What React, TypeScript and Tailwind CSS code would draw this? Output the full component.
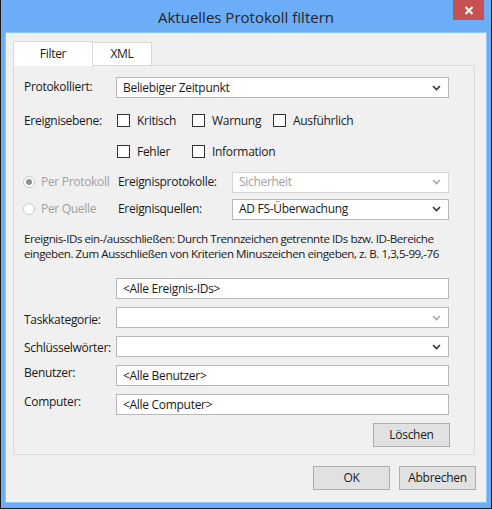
import React from "react";

const Chevron = ({ disabled }: { disabled?: boolean }) => (
  <svg width="9" height="6" viewBox="0 0 9 6" className="shrink-0">
    <path d="M1 1 L4.5 4.5 L8 1" fill="none" stroke={disabled ? "#a8a8a8" : "#333333"} strokeWidth="1.6" />
  </svg>
);

const Select = ({ value, disabled, className }: { value?: string; disabled?: boolean; className?: string }) => (
  <div
    className={`h-[21px] bg-white border flex items-center pl-[6px] pr-[7px] ${
      disabled ? "border-[#d6d6d6] text-[#a0a0a0]" : "border-[#b8b8b8] text-[#1a1a1a]"
    } ${className ?? ""}`}
  >
    <span className="flex-1 truncate">{value}</span>
    <Chevron disabled={disabled} />
  </div>
);

const Input = ({ value, className }: { value?: string; className?: string }) => (
  <div className={`h-[21px] bg-white border border-[#b8b8b8] flex items-center pl-[6px] text-[#1a1a1a] ${className ?? ""}`}>
    {value}
  </div>
);

const Check = ({ label, w }: { label: string; w?: string }) => (
  <div className={`flex items-center ${w ?? ""}`}>
    <div className="w-[13px] h-[13px] border border-[#333333] bg-white shrink-0" />
    <span className="ml-[7px] leading-[13px] whitespace-nowrap">{label}</span>
  </div>
);

const Radio = ({ label, checked }: { label: string; checked?: boolean }) => (
  <div className="flex items-center">
    <div className="w-[12px] h-[12px] rounded-full border border-[#c8c8c8] bg-white flex items-center justify-center shrink-0">
      {checked && <div className="w-[6px] h-[6px] rounded-full bg-[#8f8f8f]" />}
    </div>
    <span className="ml-[6px] text-[#a0a0a0] whitespace-nowrap">{label}</span>
  </div>
);

const Button = ({ label, className }: { label: string; className?: string }) => (
  <div
    className={`w-[77px] h-[24px] bg-[#e1e1e1] border border-[#adadad] flex items-center justify-center text-[#1a1a1a] shrink-0 ${className ?? ""}`}
  >
    {label}
  </div>
);

export default function App() {
  return (
    <div
      className="w-[492px] h-[509px] bg-[#6badf6] border-l border-r border-b border-[#1a1a1a] flex flex-col text-[12px] leading-[16px] tracking-[-0.3px] text-[#1a1a1a] overflow-hidden"
      style={{ fontFamily: "'Open Sans', 'Noto Sans', sans-serif" }}
    >
      {/* Title bar */}
      <div className="h-[32px] relative flex items-center justify-center shrink-0">
        <span className="text-[15px] tracking-normal text-[#262626] mt-[1px]">Aktuelles Protokoll filtern</span>
        <div className="absolute right-[7px] top-0 w-[31px] h-[20px] bg-[#c75050] flex items-center justify-center">
          <svg width="10" height="9" viewBox="0 0 10 9">
            <path d="M1.5 1 L8.5 8 M8.5 1 L1.5 8" stroke="white" strokeWidth="2" />
          </svg>
        </div>
      </div>

      {/* Client */}
      <div className="h-[471px] mx-[4px] bg-[#f0f0f0] border border-[#8ec3fb] flex flex-col pt-[8px] pl-[7px] pr-[11px] shrink-0">
        {/* Tabs */}
        <div className="flex items-end h-[24px] relative z-10 shrink-0">
          <div className="w-[80px] h-[25px] -mb-[1px] bg-white border border-b-0 border-[#d9d9d9] flex items-center justify-center">
            Filter
          </div>
          <div className="w-[59px] h-[23px] bg-white border border-l-0 border-b-0 border-[#d9d9d9] flex items-center justify-center">
            XML
          </div>
        </div>

        {/* Panel */}
        <div className="h-[390px] border border-[#d9d9d9] flex flex-col pl-[10px] pr-[25px] pt-[11px] shrink-0">
          {/* Protokolliert */}
          <div className="flex items-start h-[21px] shrink-0">
            <span className="w-[92px] pt-[2px]">Protokolliert:</span>
            <Select value="Beliebiger Zeitpunkt" className="flex-1" />
          </div>

          {/* Ereignisebene */}
          <div className="flex items-center h-[13px] mt-[16px] shrink-0">
            <span className="w-[92px]">Ereignisebene:</span>
            <div className="flex ml-[1px]">
              <Check label="Kritisch" w="w-[75px]" />
              <Check label="Warnung" w="w-[81px]" />
              <Check label="Ausführlich" />
            </div>
          </div>
          <div className="flex items-center h-[13px] mt-[18px] shrink-0">
            <span className="w-[92px]" />
            <div className="flex ml-[1px]">
              <Check label="Fehler" w="w-[75px]" />
              <Check label="Information" />
            </div>
          </div>

          {/* Per Protokoll */}
          <div className="flex items-center h-[20px] mt-[14px] shrink-0">
            <div className="w-[95px] ml-[-1px]">
              <Radio label="Per Protokoll" checked />
            </div>
            <span className="w-[114px]">Ereignisprotokolle:</span>
            <Select value="Sicherheit" disabled className="flex-1 h-[20px]" />
          </div>
          <div className="flex items-center h-[20px] mt-[7px] shrink-0">
            <div className="w-[95px] ml-[-1px]">
              <Radio label="Per Quelle" />
            </div>
            <span className="w-[114px]">Ereignisquellen:</span>
            <Select value="AD FS-Überwachung" className="flex-1 h-[20px]" />
          </div>

          {/* Paragraph */}
          <p className="mt-[12px] text-[11.6px] leading-[15px] tracking-[-0.45px] whitespace-nowrap shrink-0">
            Ereignis-IDs ein-/ausschließen: Durch Trennzeichen getrennte IDs bzw. ID-Bereiche
            <br />
            eingeben. Zum Ausschließen von Kriterien Minuszeichen eingeben, z. B. 1,3,5-99,-76
          </p>

          <div className="flex items-start h-[21px] mt-[17px] shrink-0">
            <span className="w-[92px]" />
            <Input value="<Alle Ereignis-IDs>" className="flex-1" />
          </div>
          <div className="flex items-start h-[21px] mt-[8px] shrink-0">
            <span className="w-[92px] pt-[5px]">Taskkategorie:</span>
            <Select disabled className="flex-1 !border-[#b8b8b8]" />
          </div>
          <div className="flex items-start h-[21px] mt-[8px] shrink-0">
            <span className="w-[92px] pt-[4px]">Schlüsselwörter:</span>
            <Select className="flex-1" />
          </div>
          <div className="flex items-start h-[21px] mt-[8px] shrink-0">
            <span className="w-[92px] pt-[0px]">Benutzer:</span>
            <Input value="<Alle Benutzer>" className="flex-1" />
          </div>
          <div className="flex items-start h-[21px] mt-[8px] shrink-0">
            <span className="w-[92px] pt-[0px]">Computer:</span>
            <Input value="<Alle Computer>" className="flex-1" />
          </div>

          <div className="flex justify-end mt-[8px] mr-[-1px] shrink-0">
            <Button label="Löschen" />
          </div>
        </div>

        {/* Bottom buttons */}
        <div className="flex justify-end gap-[9px] mt-[11px] mr-[-1px] shrink-0">
          <Button label="OK" />
          <Button label="Abbrechen" />
        </div>
      </div>
    </div>
  );
}
